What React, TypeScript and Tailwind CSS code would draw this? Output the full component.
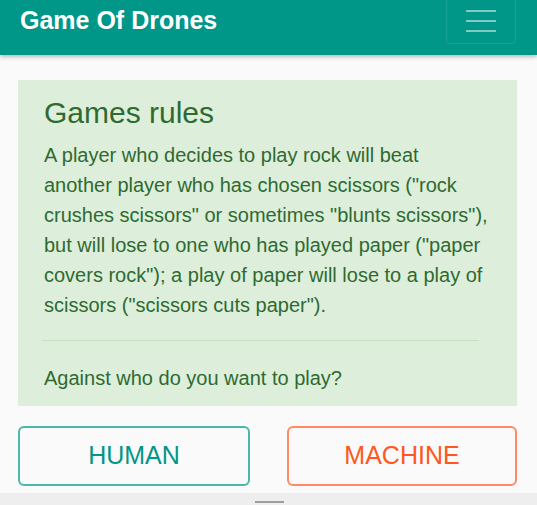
export default function App() {
  return (
    <div className="h-[505px] w-[537px] overflow-hidden bg-[#fafafa] font-['Liberation_Sans',Arial,sans-serif] flex flex-col">
      <header className="h-[55px] shrink-0 bg-[#009688] shadow-[0_2px_4px_rgba(0,0,0,0.25)] flex items-start justify-between pl-5 pr-[21px] relative z-10">
        <h1 className="text-white font-bold text-[25px] leading-none mt-[8px]">Game Of Drones</h1>
        <button className="w-[70px] h-[55px] -mt-[11px] border border-white/10 rounded flex flex-col items-center justify-start gap-[8px] pt-[20px]">
          <span className="block w-[30px] h-[2px] bg-white/50"></span>
          <span className="block w-[30px] h-[2px] bg-white/50"></span>
          <span className="block w-[30px] h-[2px] bg-white/50"></span>
        </button>
      </header>

      <main className="flex-1 pl-[18px] pr-5 pt-[25px]">
        <section className="bg-[#ddefdb] text-[#2f6a31] px-[26px] pt-[15px] pb-[13px]">
          <h2 className="text-[30px] leading-[36px]">Games rules</h2>
          <p className="text-[20px] leading-[30px] mt-[9px]">
            A player who decides to play rock will beat another player who has chosen scissors ("rock crushes scissors" or sometimes "blunts scissors"), but will lose to one who has played paper ("paper covers rock"); a play of paper will lose to a play of scissors ("scissors cuts paper").
          </p>
          <hr className="border-0 border-t border-[#c6e2c0] mt-[20px] -ml-[2px] mr-[12px]" />
          <p className="text-[20px] leading-[30px] mt-[22px]">Against who do you want to play?</p>
        </section>

        <div className="flex justify-between mt-[20px]">
          <button className="w-[232px] h-[60px] rounded-[6px] border-2 border-[#4db6ac] text-[#009688] text-[25px]">HUMAN</button>
          <button className="w-[230px] h-[60px] rounded-[6px] border-2 border-[#ff8a65] text-[#ff5722] text-[25px]">MACHINE</button>
        </div>
      </main>

      <div className="h-[12px] shrink-0 bg-[#eeeeee] flex justify-center pt-[8px]">
        <span className="block w-[29px] h-[2px] bg-[#9e9e9e] ml-[1px]"></span>
      </div>
    </div>
  );
}
